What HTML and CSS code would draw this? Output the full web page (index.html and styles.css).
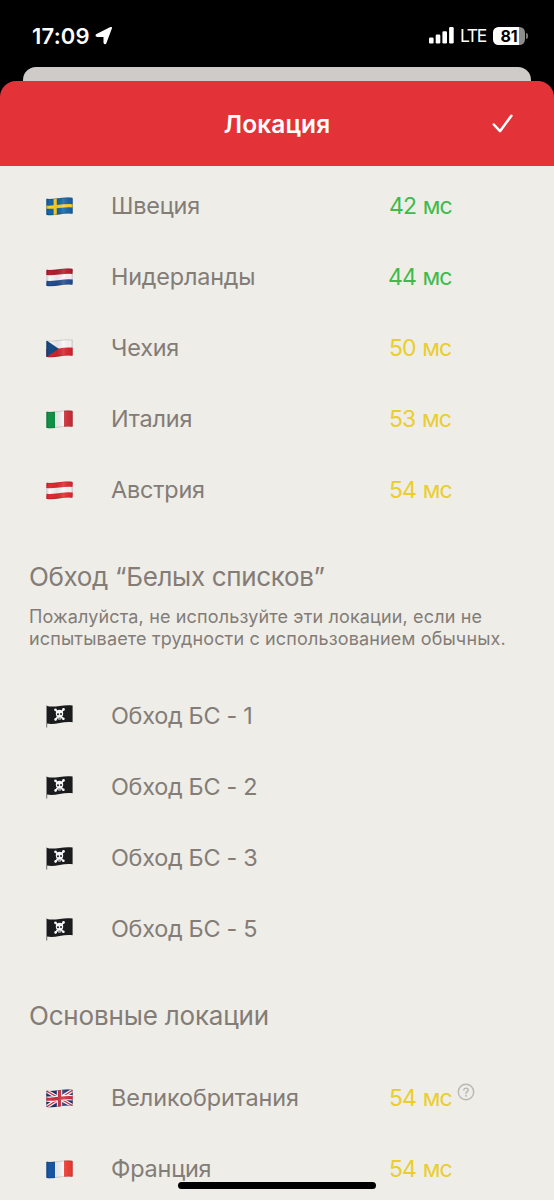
FILE: index.html
```html
<!DOCTYPE html>
<html lang="ru">
<head>
<meta charset="utf-8">
<title>Локация</title>
<link rel="stylesheet" href="styles.css">
</head>
<body>
<svg class="defs" width="0" height="0" aria-hidden="true">
  <defs>
    <clipPath id="wave"><path d="M.3 2.4Q.3 1.7 1 1.8C9 2.9 17-.6 25.8.8Q26.7.9 26.7 1.7V16.1Q26.7 16.8 25.9 16.7C17 15.4 9 19.2 1 18Q.3 17.9.3 17.2Z"/></clipPath>
    <linearGradient id="shade">
      <stop offset="0" stop-color="#000" stop-opacity=".22"/>
      <stop offset=".12" stop-color="#000" stop-opacity="0"/>
      <stop offset=".4" stop-color="#000" stop-opacity=".08"/>
      <stop offset=".65" stop-color="#fff" stop-opacity=".12"/>
      <stop offset=".92" stop-color="#000" stop-opacity=".03"/>
      <stop offset="1" stop-color="#000" stop-opacity=".25"/>
    </linearGradient>
    <symbol id="gloss" viewBox="0 0 27 20">
      <path fill="url(#shade)" d="M0 0H27V20H0Z" clip-path="url(#wave)"/>
      <path d="M.6 17.7C9 19 17 15 26.5 16.5M.6 2C9 3.1 17-.4 26.5 1.1" fill="none" stroke="#000" stroke-opacity=".2" stroke-width=".7"/>
    </symbol>
    <symbol id="pirate" viewBox="0 0 27 24">
      <path d="M.7 1.5V23.5" stroke="#777b7b" stroke-width="1.1"/>
      <path d="M1 2C9 4 17 0 26.6 1.5V18.3C17 17 9 21.3 1 19.6Z" fill="#191b1c"/>
      <g fill="none" stroke="#f5f5f5" stroke-width="1.7" stroke-linecap="round"><path d="M9.4 5.8L17.3 15M17.6 5.3L9.6 15.6"/></g>
      <g fill="#f5f5f5"><circle cx="9.5" cy="5.8" r="1.3"/><circle cx="17.5" cy="5.4" r="1.3"/><circle cx="9.6" cy="15.4" r="1.3"/><circle cx="17.4" cy="14.8" r="1.3"/><ellipse cx="13.5" cy="9.6" rx="3.7" ry="3.9"/><rect x="11.7" y="12" width="3.6" height="3.4" rx="1"/></g>
      <g fill="#191b1c"><circle cx="12" cy="10.2" r="1"/><circle cx="15" cy="10" r="1"/><path d="M12.3 13.8h2.4v.7h-2.4z"/></g>
    </symbol>
  </defs>
</svg>
<div class="screen">
  <div class="status">
    <span class="time">17:09</span>
    <svg class="arrow" width="18" height="18" viewBox="0 0 18 18"><path d="M16.2 1.2 10.8 15.8Q10 17.3 9.2 15.7V9.2H2.2Q.4 8.6 1.9 7.6L15.2.9Q16.7.3 16.2 1.2Z" fill="#fff" stroke="#fff" stroke-width="1.4" stroke-linejoin="round"/></svg>
    <svg class="signal" width="25" height="17" viewBox="0 0 25 17" fill="#fff"><rect x="0" y="10.5" width="4.6" height="6" rx="1.2"/><rect x="6.7" y="7.5" width="4.6" height="9" rx="1.2"/><rect x="13.4" y="4.2" width="4.6" height="12.3" rx="1.2"/><rect x="20.1" y="0" width="4.6" height="16.5" rx="1.2"/></svg>
    <span class="lte">LTE</span>
    <div class="battery"><span>81</span></div>
    <i class="nub"></i>
  </div>
  <div class="behind"></div>
  <header class="header">
    <h1>Локация</h1>
    <svg class="check" width="22" height="20" viewBox="0 0 22 20"><path d="M1.8 10.5 8 17.2 19.4 1.8" fill="none" stroke="#fff" stroke-width="2.5" stroke-linecap="round" stroke-linejoin="round"/></svg>
  </header>
  <main class="content">
    <ul class="list">
      <li class="row">
        <svg class="flag" viewBox="0 0 27 20"><g clip-path="url(#wave)"><path fill="#1766a5" d="M0 0H27V20H0Z"/><path d="M9.2 0V20M0 10.1C9 11.2 17 7.5 27 8.8" fill="none" stroke="#ffd22d" stroke-width="3.2"/></g><use href="#gloss"/></svg>
        <span class="name">Швеция</span><span class="ping good">42 мс</span>
      </li>
      <li class="row">
        <svg class="flag" viewBox="0 0 27 20"><g clip-path="url(#wave)"><path fill="#f7f7f7" d="M0 0H27V20H0Z"/><path d="M0 4.1C9 5.2 17 1.8 27 3" fill="none" stroke="#b51f30" stroke-width="6"/><path d="M0 15.7C9 16.9 17 13 27 14.4" fill="none" stroke="#244f91" stroke-width="5.8"/></g><use href="#gloss"/></svg>
        <span class="name">Нидерланды</span><span class="ping good wide">44 мс</span>
      </li>
      <li class="row">
        <svg class="flag" viewBox="0 0 27 20"><g clip-path="url(#wave)"><path fill="#f7f7f7" d="M0 0H27V20H0Z"/><path d="M0 10C9 11.1 17 7.4 27 8.7V20H0Z" fill="#db2430"/><path d="M0 1 12.7 9.8 0 18.5Z" fill="#174b83"/></g><use href="#gloss"/></svg>
        <span class="name">Чехия</span><span class="ping fair">50 мс</span>
      </li>
      <li class="row">
        <svg class="flag" viewBox="0 0 27 20"><g clip-path="url(#wave)"><path fill="#f7f7f7" d="M0 0H27V20H0Z"/><path fill="#119348" d="M0 0H9V20H0Z"/><path fill="#cf303a" d="M18 0H27V20H18Z"/></g><use href="#gloss"/></svg>
        <span class="name">Италия</span><span class="ping fair">53 мс</span>
      </li>
      <li class="row">
        <svg class="flag" viewBox="0 0 27 20"><g clip-path="url(#wave)"><path fill="#f7f7f7" d="M0 0H27V20H0Z"/><path d="M0 4.1C9 5.2 17 1.8 27 3M0 15.7C9 16.9 17 13 27 14.4" fill="none" stroke="#e42a30" stroke-width="5.8"/></g><use href="#gloss"/></svg>
        <span class="name">Австрия</span><span class="ping fair">54 мс</span>
      </li>
    </ul>
    <section class="intro">
      <h2 class="bypass">Обход “Белых списков”</h2>
      <p>Пожалуйста, не используйте эти локации, если не<br>испытываете трудности с использованием обычных.</p>
    </section>
    <ul class="list">
      <li class="row"><svg class="flag pirate" viewBox="0 0 27 24"><use href="#pirate"/></svg><span class="name bs">Обход БС - 1</span></li>
      <li class="row"><svg class="flag pirate" viewBox="0 0 27 24"><use href="#pirate"/></svg><span class="name bs">Обход БС - 2</span></li>
      <li class="row"><svg class="flag pirate" viewBox="0 0 27 24"><use href="#pirate"/></svg><span class="name bs">Обход БС - 3</span></li>
      <li class="row"><svg class="flag pirate" viewBox="0 0 27 24"><use href="#pirate"/></svg><span class="name bs">Обход БС - 5</span></li>
    </ul>
    <section class="main-title">
      <h2>Основные локации</h2>
    </section>
    <ul class="list">
      <li class="row">
        <svg class="flag" viewBox="0 0 27 20"><g clip-path="url(#wave)"><path fill="#23346f" d="M0 0H27V20H0Z"/><path d="M0 1.8 27 17M0 18.2 27 1" stroke="#fff" stroke-width="3.6"/><path d="M0 1.8 27 17M0 18.2 27 1" stroke="#d52f43" stroke-width="1.2"/><path d="M13.5 0V20M0 10.1C9 11.2 17 7.5 27 8.8" fill="none" stroke="#fff" stroke-width="5.4"/><path d="M13.5 0V20M0 10.1C9 11.2 17 7.5 27 8.8" fill="none" stroke="#d52f43" stroke-width="3.2"/></g><use href="#gloss"/></svg>
        <span class="name long">Великобритания</span><span class="ping fair">54 мс</span>
        <svg class="help" width="18" height="18" viewBox="0 0 18 18" fill="none" stroke="#b9b7b2" stroke-width="1.4" stroke-linecap="round"><circle cx="9" cy="9" r="7.7"/><path d="M6.8 7.1C6.8 4.4 11.3 4.5 11.2 7.1 11.1 8.7 9 8.6 9 10.4"/><circle cx="9" cy="12.8" r=".35"/></svg>
      </li>
      <li class="row">
        <svg class="flag" viewBox="0 0 27 20"><g clip-path="url(#wave)"><path fill="#f7f7f7" d="M0 0H27V20H0Z"/><path fill="#1956a5" d="M0 0H9V20H0Z"/><path fill="#ef3e36" d="M18 0H27V20H18Z"/></g><use href="#gloss"/></svg>
        <span class="name">Франция</span><span class="ping fair">54 мс</span>
      </li>
    </ul>
  </main>
  <div class="home-indicator"></div>
</div>
</body>
</html>
```
FILE: styles.css
```css
* { box-sizing: border-box; }
body { margin: 0; background: #000; font-family: Inter, "Liberation Sans", sans-serif; }
.defs { display: block; position: absolute; }
.screen { position: relative; width: 554px; height: 1200px; overflow: hidden; display: flex; flex-direction: column; background: #000; }
.status { height: 67px; flex: none; display: flex; align-items: center; padding: 4px 26px 0 32px; color: #fff; }
.time { width: 63px; font-size: 22px; font-weight: 600; letter-spacing: .2px; }
.arrow { margin-right: auto; }
.signal { margin-right: 6px; }
.lte { width: 33px; font-size: 17.5px; font-weight: 400; letter-spacing: -1.4px; }
.battery { width: 32px; height: 18px; border-radius: 5.5px; background: linear-gradient(90deg, #fff 26px, #8c8c8c 26px); color: #000; font-size: 16px; line-height: 18px; font-weight: 700; text-align: center; letter-spacing: -.2px; }
.nub { width: 2px; height: 6px; margin-left: 1px; border-radius: 0 2px 2px 0; background: #777; }
.behind { flex: none; height: 14px; margin: 0 23px; border-radius: 13px 13px 0 0; background: #cfcbc8; }
.header { flex: none; height: 85px; display: grid; grid-template-columns: 80px 1fr 80px; place-items: center; border-radius: 16px 16px 0 0; background: #e33338; color: #fff; }
.header h1 { grid-column: 2; margin: 0; font-size: 24.5px; line-height: 30px; font-weight: 600; letter-spacing: .1px; }
.check { margin-right: 23px; }
.content { flex: 1; min-height: 0; overflow: hidden; padding-top: 4px; background: #eeede8; color: #837c77; }
.list { margin: 0; padding: 0; list-style: none; }
.row { height: 71px; display: grid; grid-template-columns: 65px 278px 65px 30px; align-items: center; padding-left: 46px; font-size: 23.4px; line-height: 30px; }
.flag { width: 27px; height: 20px; margin-top: 2px; }
.pirate { height: 24px; margin-top: 1px; }
.name, .ping { white-space: nowrap; }
.name { letter-spacing: -.18px; }
.long { letter-spacing: -.08px; }
.bs { letter-spacing: -.28px; }
.ping { font-size: 23px; letter-spacing: -.95px; word-spacing: 1.2px; }
.wide { margin-left: -1px; }
.good { color: #3ebb4b; }
.fair { color: #eacd2e; }
.help { margin: -12px 0 0 3px; }
.content h2 { margin: 0; font-size: 26px; line-height: 32px; font-weight: 400; letter-spacing: -.18px; white-space: nowrap; }
.content .bypass { letter-spacing: -.34px; }
.intro { height: 155px; padding: 36px 29px 0; }
.intro p { margin: 13px 0 0; font-size: 18px; line-height: 22px; letter-spacing: .15px; white-space: nowrap; }
.main-title { height: 98px; padding: 36px 29px 0; }
.home-indicator { position: absolute; left: 178px; bottom: 11px; width: 198px; height: 7px; border-radius: 4px; background: #000; }
```
